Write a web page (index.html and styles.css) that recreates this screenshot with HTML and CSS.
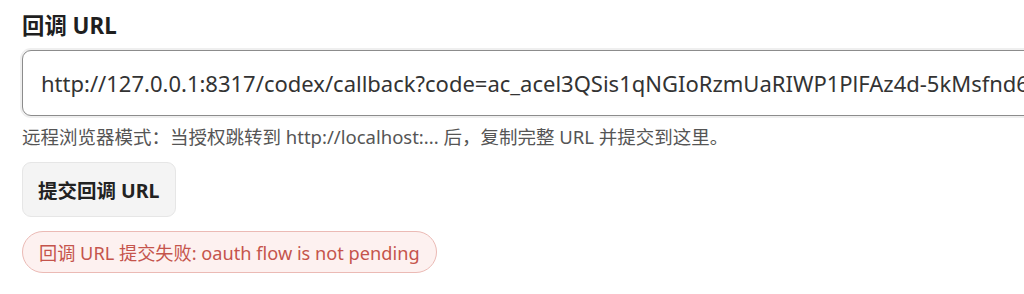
FILE: index.html
```html
<!DOCTYPE html>
<html lang="zh">
<head>
<meta charset="utf-8">
<link rel="stylesheet" href="styles.css">
</head>
<body>
<div class="panel">
  <label class="label" for="cb">回调 URL</label>
  <div class="input-wrap">
    <input id="cb" class="input" type="text" value="http://127.0.0.1:8317/codex/callback?code=ac_acel3QSis1qNGIoRzmUaRIWP1PlFAz4d-5kMsfnd6x8vQ&amp;state=abc">
  </div>
  <p class="hint">远程浏览器模式：当授权跳转到 http://localhost:... 后，复制完整 URL 并提交到这里。</p>
  <button class="btn" type="button">提交回调 URL</button>
  <div class="error">回调 URL 提交失败: oauth flow is not pending</div>
</div>
</body>
</html>
```
FILE: styles.css
```css
html, body {
  margin: 0;
  padding: 0;
  background: #ffffff;
  overflow: hidden;
}
body {
  font-family: "Noto Sans", "Noto Sans CJK SC", sans-serif;
  color: #222;
}
.panel {
  padding: 12px 0 0 22px;
  display: flex;
  flex-direction: column;
  align-items: flex-start;
  width: 1200px;
}
.label {
  font-size: 22.4px;
  font-weight: 700;
  line-height: 28px;
  color: #1f1f1f;
  margin-bottom: 10px;
}
.input-wrap {
  width: 1100px;
}
.input {
  box-sizing: border-box;
  width: 100%;
  height: 66px;
  padding: 0 18px;
  border: 1.5px solid #8c8c8c;
  border-radius: 9px;
  box-shadow: 0 0 0 2px #efefef;
  font-family: "Noto Sans", "Noto Sans CJK SC", sans-serif;
  font-size: 22px;
  color: #333;
  background: #fff;
  outline: none;
}
.hint {
  margin: 9px 0 0 0;
  font-size: 18.5px;
  line-height: 24px;
  color: #555;
}
.btn {
  margin-top: 13px;
  box-sizing: border-box;
  height: 55px;
  padding: 0 15px;
  background: #f4f4f4;
  border: 1px solid #e6e6e6;
  border-radius: 9px;
  font-family: "Noto Sans", "Noto Sans CJK SC", sans-serif;
  font-size: 19.5px;
  font-weight: 700;
  color: #222;
}
.error {
  margin-top: 14px;
  box-sizing: border-box;
  height: 42px;
  padding: 0 16px;
  display: flex;
  align-items: center;
  background: #fdf1f0;
  border: 1.5px solid #ebbab5;
  border-radius: 21px;
  font-size: 18.2px;
  color: #c5544c;
}
```
